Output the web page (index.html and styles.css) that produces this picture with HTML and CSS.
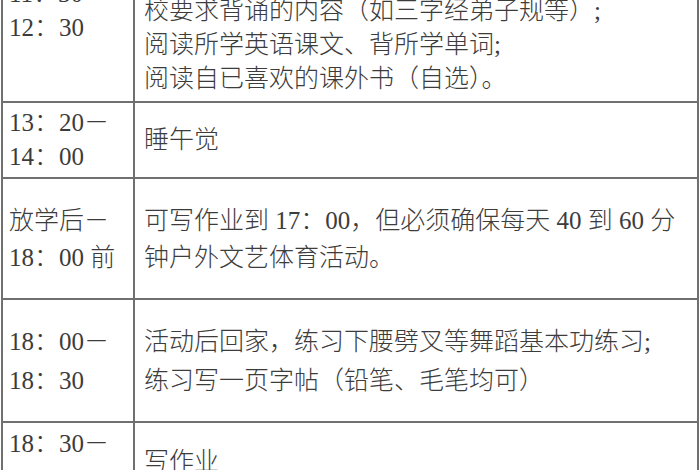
FILE: index.html
```html
<!DOCTYPE html>
<html lang="zh-CN">
<head>
<meta charset="utf-8">
<title>作息时间表</title>
<link rel="stylesheet" href="styles.css">
</head>
<body>
<div class="sheet">
  <div class="row r1">
    <div class="cell time"><p>11：30－</p><p>12：30</p></div>
    <div class="cell task"><p>午饭后休息，读书半小时：</p><p>读语文课本、背诵学</p><p>校要求背诵的内容（如三字经弟子规等）;</p><p>阅读所学英语课文、背所学单词;</p><p>阅读自已喜欢的课外书（自选）。</p></div>
  </div>
  <div class="row r2">
    <div class="cell time"><p>13：20－</p><p>14：00</p></div>
    <div class="cell task"><p>睡午觉</p></div>
  </div>
  <div class="row r3">
    <div class="cell time"><p>放学后－</p><p>18：00 前</p></div>
    <div class="cell task"><p>可写作业到 17：00，但必须确保每天 40 到 60 分</p><p>钟户外文艺体育活动。</p></div>
  </div>
  <div class="row r4">
    <div class="cell time"><p>18：00－</p><p>18：30</p></div>
    <div class="cell task"><p>活动后回家，练习下腰劈叉等舞蹈基本功练习;</p><p>练习写一页字帖（铅笔、毛笔均可）</p></div>
  </div>
  <div class="row r5">
    <div class="cell time"><p>18：30－</p><p>19：30</p></div>
    <div class="cell task"><p>写作业</p></div>
  </div>
</div>
</body>
</html>
```
FILE: styles.css
```css
html, body {
  margin: 0;
  padding: 0;
  background: #ffffff;
  overflow: hidden;
}
body {
  width: 700px;
  height: 470px;
  font-family: "Liberation Serif", "Noto Sans CJK SC", serif;
  font-size: 25px;
  font-weight: 300;
  color: #3c3c3c;
}
.sheet {
  margin: -80px 0 0 1px;
  width: 696px;
  border-left: 2px solid #707070;
}
.row {
  display: grid;
  grid-template-columns: 132px 1fr;
  border-bottom: 2px solid #707070;
  box-sizing: border-box;
}
.cell {
  display: flex;
  flex-direction: column;
  justify-content: center;
  border-right: 2px solid #707070;
}
.cell p {
  margin: 0;
  white-space: nowrap;
}
.time { padding-left: 6px; }
.task { padding-left: 9px; }
.r1 { height: 183px; line-height: 34px; }
.r2 { height: 76px; line-height: 34px; }
.r3 { height: 121px; line-height: 37px; }
.r4 { height: 123px; line-height: 39px; }
.r5 { height: 80px; line-height: 36px; }
```
